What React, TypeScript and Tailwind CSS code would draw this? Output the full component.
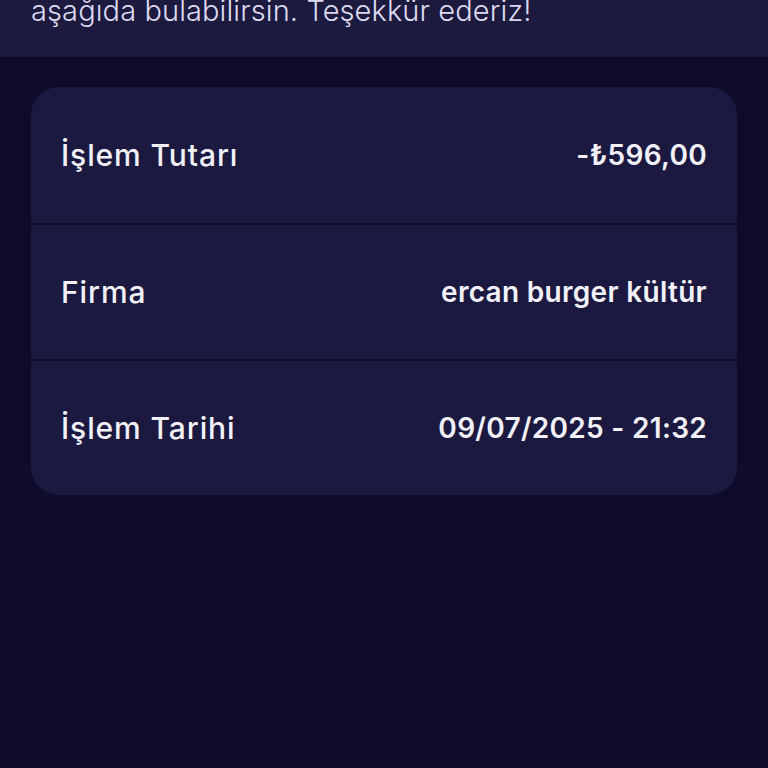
export default function App() {
  const rows = [
    { label: 'İşlem Tutarı', value: '-₺596,00' },
    { label: 'Firma', value: 'ercan burger kültür' },
    { label: 'İşlem Tarihi', value: '09/07/2025 - 21:32' },
  ]

  return (
    <div
      className="min-h-[768px] w-full bg-[#0e0c2a] text-white"
      style={{ fontFamily: 'Inter, "Noto Sans", sans-serif' }}
    >
      {/* Header explanation, scrolled so only its last line shows */}
      <div className="h-[57px] overflow-hidden bg-[#1c1a3e] px-[31px]">
        <p className="mt-[-7px] text-[29px] font-light leading-[36px] tracking-[0.1px] text-[#dcdaf0]">
          aşağıda bulabilirsin. Teşekkür ederiz!
        </p>
      </div>

      {/* Details card */}
      <div className="px-[31px] pt-[30px]">
        <div className="overflow-hidden rounded-[28px] bg-[#1b193f]">
          {rows.map((row, i) => (
            <div
              key={row.label}
              className={`flex h-[136px] items-center justify-between px-[30px] ${
                i > 0 ? 'border-t-2 border-[#100e2b]' : ''
              }`}
            >
              <span className="text-[30px] font-medium tracking-[0.9px] text-[#f2f1fa]">
                {row.label}
              </span>
              <span className="text-[28px] font-semibold tracking-[0.3px] text-[#f2f1fa]">
                {row.value}
              </span>
            </div>
          ))}
        </div>
      </div>
    </div>
  )
}
